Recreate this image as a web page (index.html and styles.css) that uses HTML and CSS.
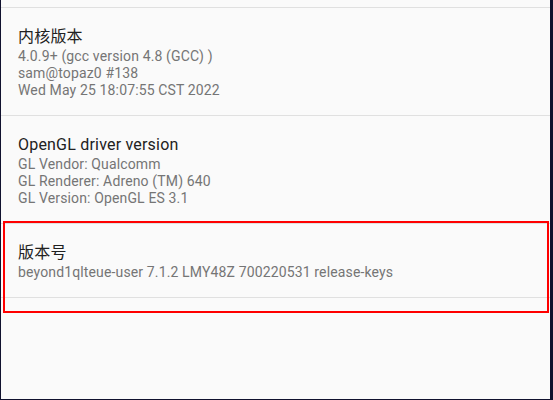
FILE: index.html
```html
<!DOCTYPE html>
<html lang="zh">
<head>
<meta charset="utf-8">
<link rel="stylesheet" href="styles.css">
</head>
<body>
<div class="frame">
  <div class="screen">
    <div class="top-gap"></div>
    <div class="item">
      <div class="title">内核版本</div>
      <div class="summary">4.0.9+ (gcc version 4.8 (GCC) )<br>sam@topaz0 #138<br>Wed May 25 18:07:55 CST 2022</div>
    </div>
    <div class="item">
      <div class="title">OpenGL driver version</div>
      <div class="summary">GL Vendor: Qualcomm<br>GL Renderer: Adreno (TM) 640<br>GL Version: OpenGL ES 3.1</div>
    </div>
    <div class="item">
      <div class="title">版本号</div>
      <div class="summary">beyond1qlteue-user 7.1.2 LMY48Z 700220531 release-keys</div>
    </div>
    <div class="highlight"></div>
  </div>
</div>
</body>
</html>
```

FILE: styles.css
```css
html, body {
  margin: 0;
  padding: 0;
  width: 553px;
  height: 400px;
  overflow: hidden;
  background: #10112e;
}
.frame {
  width: 553px;
  height: 400px;
  box-sizing: border-box;
  padding: 0 3px 1px 1px;
  background: #10112e;
}
.screen {
  position: relative;
  height: 399px;
  background: #fafafa;
  font-family: Roboto, "Noto Sans CJK SC", sans-serif;
}
.top-gap {
  height: 7px;
  border-bottom: 1px solid #e0e0e0;
}
.item {
  padding: 18px 17px 16px 17px;
  border-bottom: 1px solid #e0e0e0;
}
.title {
  font-size: 16px;
  line-height: 22px;
  letter-spacing: 0.2px;
  color: #212121;
}
.summary {
  font-size: 14px;
  line-height: 17px;
  letter-spacing: 0.14px;
  color: #757575;
}
.highlight {
  position: absolute;
  left: 2px;
  top: 221px;
  width: 546px;
  height: 92px;
  box-sizing: border-box;
  border: 2px solid #ff0000;
}
```
